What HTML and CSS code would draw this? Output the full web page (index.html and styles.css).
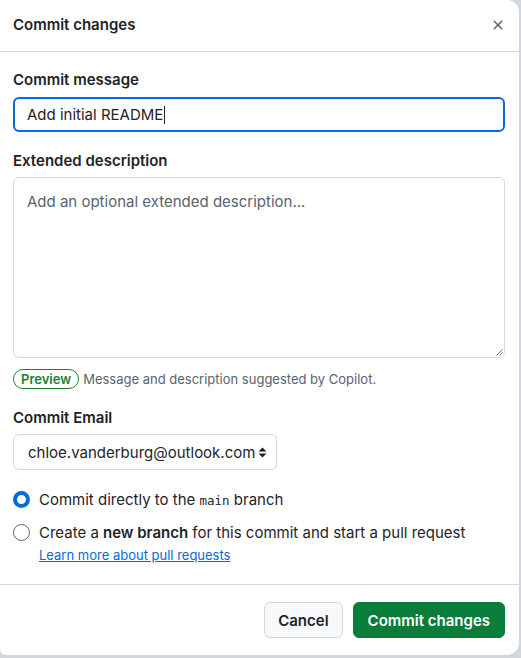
FILE: index.html
```html
<!DOCTYPE html>
<html lang="en">
<head>
<meta charset="utf-8">
<title>Commit changes</title>
<link rel="stylesheet" href="styles.css">
</head>
<body>
<div class="dialog">
  <div class="header">
    <h1 class="title">Commit changes</h1>
    <button class="close" aria-label="Close">
      <svg width="16" height="16" viewBox="0 0 16 16"><path d="M3.72 3.72a.75.75 0 0 1 1.06 0L8 6.94l3.22-3.22a.749.749 0 0 1 1.275.326.749.749 0 0 1-.215.734L9.06 8l3.22 3.22a.749.749 0 0 1-.326 1.275.749.749 0 0 1-.734-.215L8 9.06l-3.22 3.22a.751.751 0 0 1-1.042-.018.751.751 0 0 1-.018-1.042L6.94 8 3.72 4.78a.75.75 0 0 1 0-1.06Z" fill="currentColor"/></svg>
    </button>
  </div>
  <div class="body">
    <label class="label">Commit message</label>
    <div class="input focused"><span class="value">Add initial README</span><span class="caret"></span></div>

    <label class="label label-ext">Extended description</label>
    <div class="textarea">
      <span class="placeholder">Add an optional extended description...</span>
      <svg class="grip" width="8" height="8" viewBox="0 0 8 8"><path d="M7.5 1.5 1.5 7.5M7.5 4.5 4.5 7.5" stroke="#6e7781" stroke-width="1" fill="none"/></svg>
    </div>
    <div class="suggest">
      <span class="pill">Preview</span>
      <span class="suggest-text">Message and description suggested by Copilot.</span>
    </div>

    <label class="label label-email">Commit Email</label>
    <div class="select">
      <span>chloe.vanderburg@outlook.com</span>
      <svg class="updown" width="9" height="11" viewBox="0 0 9 11"><path d="M4.5 0.5 8.5 4.5H0.5Z M4.5 10.5 0.5 6.5H8.5Z" fill="#1f2328"/></svg>
    </div>

    <div class="radios">
      <div class="radio-row">
        <span class="radio checked"></span>
        <span class="radio-text">Commit directly to the <code>main</code> branch</span>
      </div>
      <div class="radio-row">
        <span class="radio"></span>
        <span class="radio-text">Create a <strong>new branch</strong> for this commit and start a pull request</span>
      </div>
      <a class="learn" href="#">Learn more about pull requests</a>
    </div>
  </div>
  <div class="footer">
    <button class="btn">Cancel</button>
    <button class="btn btn-primary">Commit changes</button>
  </div>
</div>
</body>
</html>
```

FILE: styles.css
```css
* { box-sizing: border-box; }
html, body { margin: 0; padding: 0; }
body {
  background: #d3d7db;
  width: 521px;
  height: 658px;
  font-family: "Inter", "Liberation Sans", sans-serif;
  color: #1f2328;
  font-size: 15px;
  overflow: hidden;
}
.dialog {
  width: 519px;
  height: 655px;
  background: #fff;
  border-radius: 0 12px 12px 6px;
  display: flex;
  flex-direction: column;
}
.header {
  height: 52px;
  border-bottom: 1px solid #d1d9e0;
  display: flex;
  align-items: center;
  justify-content: space-between;
  padding: 0 13px 1px 13px;
}
.title {
  margin: 0;
  font-size: 15px;
  font-weight: 600;
  line-height: 20px;
}
.close {
  border: 0;
  background: none;
  padding: 0;
  width: 16px;
  height: 16px;
  color: #59636e;
}
.close svg { display: block; }
.body {
  flex: 1;
  padding: 18px 14px 0 13px;
  display: flex;
  flex-direction: column;
}
.label {
  display: block;
  font-weight: 600;
  font-size: 15px;
  line-height: 20px;
  margin-bottom: 7px;
}
.label-ext { margin-top: 19px; margin-bottom: 6px; }
.label-email { margin-top: 19px; margin-bottom: 6px; }
.input {
  height: 35px;
  border: 1px solid #d1d9e0;
  border-radius: 6px;
  display: flex;
  align-items: center;
  padding: 0 12px;
  font-size: 15px;
}
.input.focused {
  border: 2px solid #0969da;
}
.caret {
  display: inline-block;
  width: 1px;
  height: 18px;
  background: #1f2328;
  margin-left: 1px;
}
.textarea {
  position: relative;
  height: 181px;
  border: 1px solid #d1d9e0;
  border-radius: 6px;
  padding: 14px 13px;
}
.placeholder {
  color: #59636e;
  font-size: 15px;
  line-height: 20px;
}
.grip {
  position: absolute;
  right: 1px;
  bottom: 1px;
}
.suggest {
  display: flex;
  align-items: center;
  margin-top: 11px;
  gap: 4px;
}
.pill {
  display: inline-flex;
  align-items: center;
  height: 20px;
  padding: 0 7px;
  border: 1px solid #1a7f37;
  border-radius: 999px;
  color: #1a7f37;
  font-size: 13px;
  font-weight: 600;
}
.suggest-text {
  color: #59636e;
  font-size: 13px;
}
.select {
  width: 264px;
  height: 36px;
  border: 1px solid #d1d9e0;
  border-radius: 6px;
  display: flex;
  align-items: center;
  justify-content: space-between;
  padding: 0 9px 0 14px;
  font-size: 15px;
}
.updown { display: block; }
.radios {
  margin-top: 19px;
  display: flex;
  flex-direction: column;
}
.radio-row {
  display: flex;
  align-items: center;
  height: 20px;
  margin-bottom: 13px;
}
.radio-row + .radio-row { margin-bottom: 4px; }
.radio {
  width: 17px;
  height: 17px;
  border-radius: 50%;
  border: 1px solid #59636e;
  margin-right: 9px;
  flex: none;
}
.radio.checked {
  border: 4px solid #0969da;
}
.radio-text {
  font-size: 15px;
}
.radio-text strong { font-weight: 600; }
code {
  font-family: "DejaVu Sans Mono", "Liberation Mono", monospace;
  font-size: 12.5px;
}
.learn {
  margin-left: 26px;
  color: #0969da;
  font-size: 13px;
  text-decoration: underline;
  line-height: 18px;
}
.footer {
  height: 71px;
  border-top: 1px solid #d1d9e0;
  display: flex;
  justify-content: flex-end;
  align-items: center;
  gap: 10px;
  padding: 0 14px 0 13px;
}
.btn {
  height: 36px;
  padding: 0 13px;
  border-radius: 6px;
  border: 1px solid #d1d9e0;
  background: #f6f8fa;
  color: #1f2328;
  font-family: inherit;
  font-size: 15px;
  font-weight: 600;
}
.btn-primary {
  background: #0b7d3a;
  border-color: #0b7d3a;
  color: #fff;
  padding: 0 14px;
}
```
